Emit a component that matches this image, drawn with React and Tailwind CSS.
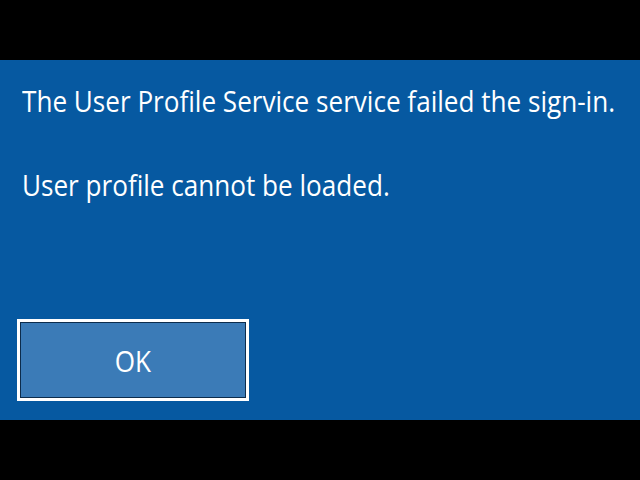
export default function App() {
  return (
    <div className="flex h-[480px] w-[640px] flex-col bg-black font-['Open_Sans',sans-serif]">
      <div className="h-[60px]" />
      <div className="flex h-[360px] flex-col bg-[#0659a1] px-[22px] pt-[21px] text-white">
        <p className="origin-left scale-x-[0.87] whitespace-nowrap text-[30px] leading-[40px]">
          The User Profile Service service failed the sign-in.
        </p>
        <p className="mt-[44px] origin-left scale-x-[0.87] whitespace-nowrap text-[30px] leading-[40px]">
          User profile cannot be loaded.
        </p>
        <div className="mt-[114px] ml-[-5px] h-[82px] w-[232px] border-[3px] border-white">
          <div className="flex h-full w-full items-center justify-center border border-[#0c2c4c] bg-[#3b7bb7]">
            <span className="scale-x-[0.87] text-[30px]">OK</span>
          </div>
        </div>
      </div>
      <div className="h-[60px]" />
    </div>
  );
}
